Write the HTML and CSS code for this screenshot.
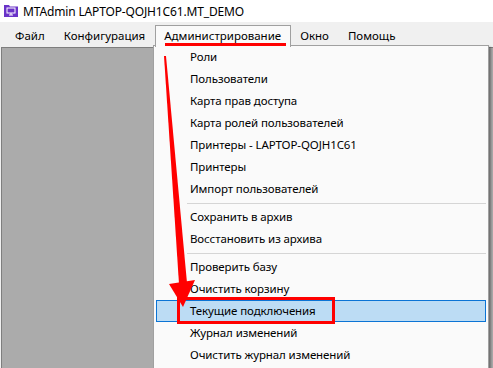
FILE: index.html
```html
<!DOCTYPE html>
<html lang="ru">
<head>
    <meta charset="UTF-8">
    <meta name="viewport" content="width=device-width, initial-scale=1.0">
    <title>MTAdmin</title>
    <link rel="stylesheet" href="styles.css">
</head>
<body>
    <div class="window">
        <div class="titlebar">
            <svg class="app-icon" width="14" height="13" viewBox="0 0 14 13">
                <path d="M0 1h5l1 1.5h8V13H0z" fill="#6a33c8"/>
                <rect x="3" y="4" width="8" height="5" fill="none" stroke="#fff" stroke-width="1"/>
                <path d="M5 11h4M7 9v2" stroke="#fff" stroke-width="1"/>
            </svg>
            <span class="title">MTAdmin LAPTOP-QOJH1C61.MT_DEMO</span>
        </div>

        <div class="menubar">
            <span class="menu-item">Файл</span>
            <span class="menu-item">Конфигурация</span>
            <span class="menu-item open">Администрирование</span>
            <span class="menu-item">Окно</span>
            <span class="menu-item">Помощь</span>
        </div>

        <div class="client"></div>

        <div class="dropdown">
            <div class="row">Роли</div>
            <div class="row">Пользователи</div>
            <div class="row">Карта прав доступа</div>
            <div class="row">Карта ролей пользователей</div>
            <div class="row">Принтеры - LAPTOP-QOJH1C61</div>
            <div class="row">Принтеры</div>
            <div class="row">Импорт пользователей</div>
            <div class="sep"></div>
            <div class="row">Сохранить в архив</div>
            <div class="row">Восстановить из архива</div>
            <div class="sep"></div>
            <div class="row">Проверить базу</div>
            <div class="row">Очистить корзину</div>
            <div class="row active">Текущие подключения</div>
            <div class="row">Журнал изменений</div>
            <div class="row">Очистить журнал изменений</div>
        </div>

        <!-- annotation drawn over the screenshot -->
        <svg class="annot" width="493" height="368" viewBox="0 0 493 368">
            <rect x="165" y="43" width="121" height="3" fill="#f00"/>
            <polygon points="164,56 166,56 187,283 179,284" fill="#f00"/>
            <polygon points="169,284 195,280 183,307" fill="#f00"/>
            <rect x="178.5" y="298.5" width="155" height="24" fill="none" stroke="#f00" stroke-width="3"/>
        </svg>
    </div>
</body>
</html>
```

FILE: styles.css
```css
body {
    margin: 0;
    font-family: "Noto Sans", "Open Sans", sans-serif;
    font-size: 11.5px;
    color: #000;
    overflow: hidden;
}
.window {
    position: relative;
    width: 493px;
    height: 368px;
    overflow: hidden;
    background: #f0f0f0;
    display: flex;
    flex-direction: column;
}
.titlebar {
    height: 22px;
    background: #fff;
    display: flex;
    align-items: center;
    padding-left: 4px;
    gap: 5px;
}
.app-icon {
    margin-top: -1px;
}
.title {
    font-size: 12px;
    letter-spacing: -0.15px;
}
.menubar {
    height: 22px;
    padding: 3px 0 0 6px;
    display: flex;
    align-items: flex-start;
    background: #f0f0f0;
}
.menu-item {
    height: 20px;
    line-height: 20px;
    padding: 0 9px 0 8px;
    border: 1px solid transparent;
    border-bottom: none;
}
.menu-item.open {
    background: #fafafa;
    border-color: #a0a0a0;
    position: relative;
    z-index: 2;
    height: 21px;
}
.client {
    flex: 1;
    margin-left: 1px;
    background: #ababab;
    border-top: 1px solid #7e7e7e;
    border-left: 1px solid #7e7e7e;
}
.dropdown {
    position: absolute;
    left: 153px;
    top: 45px;
    width: 330px;
    padding: 0 2px 4px 2px;
    background: #fafafa;
    border: 1px solid #a0a0a0;
    box-shadow: 2px 2px 2px rgba(0, 0, 0, 0.35);
}
.row {
    height: 20px;
    line-height: 20px;
    padding-left: 33px;
    border: 1px solid transparent;
    white-space: nowrap;
    letter-spacing: -0.1px;
}
.row.active {
    background: #bcdcf4;
    border-color: #0b74d5;
}
.sep {
    height: 6px;
    margin-left: 31px;
    display: flex;
    align-items: center;
}
.sep::before {
    content: "";
    flex: 1;
    height: 1px;
    background: #d5d5d5;
}
.annot {
    position: absolute;
    left: 0;
    top: 0;
    pointer-events: none;
    z-index: 5;
}
```
